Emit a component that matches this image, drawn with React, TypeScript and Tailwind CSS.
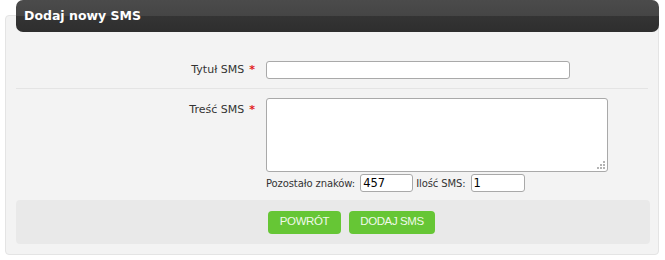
const font = { fontFamily: '"DejaVu Sans", Verdana, sans-serif' };

function Grip() {
  const dots = [
    [6, 0],
    [3, 3],
    [6, 3],
    [0, 6],
    [3, 6],
    [6, 6],
  ];
  return (
    <div className="pointer-events-none absolute bottom-[3px] right-[3px] h-[8px] w-[8px]">
      {dots.map(([x, y]) => (
        <span
          key={`${x}-${y}`}
          className="absolute h-[2px] w-[2px] bg-[#b4b4b4]"
          style={{ left: x, top: y }}
        />
      ))}
    </div>
  );
}

export default function App() {
  return (
    <div className="h-[260px] w-[665px] overflow-hidden bg-white pt-[15px] pl-[5px]" style={font}>
      <div className="w-[654px] rounded-[4px] border border-[#e4e4e4] bg-[#f3f3f3] px-[10px] pb-[10px]">
        <div className="-mr-[11px] -mt-[16px] flex h-[32px] items-center rounded-[7px] bg-[linear-gradient(#4b4b4b,#454545_50%,#343434_50%,#2e2e2e)] pl-[8px]">
          <span className="text-[12.5px] font-bold text-white">Dodaj nowy SMS</span>
        </div>

        <div className="flex items-center pt-[29px] pb-[9px]">
          <label className="w-[240px] pr-[1px] text-right text-[11px] text-[#333]">
            Tytuł SMS<span className="ml-[5px] font-bold text-[#e21b1b]">*</span>
          </label>
          <input
            type="text"
            className="ml-[10px] h-[18px] w-[304px] rounded-[3px] border border-[#a9a9a9] bg-white px-[3px] text-[12px] outline-none"
          />
        </div>

        <div className="h-px bg-[#e4e4e4]" />

        <div className="flex items-start pt-[9px]">
          <label className="w-[240px] pt-[4px] pr-[1px] text-right text-[11px] text-[#333]">
            Treść SMS<span className="ml-[5px] font-bold text-[#e21b1b]">*</span>
          </label>
          <div className="ml-[10px]">
            <div className="relative">
              <textarea className="block h-[74px] w-[342px] resize-none rounded-[3px] border border-[#a9a9a9] bg-white outline-none" />
              <Grip />
            </div>
            <div className="mt-[2px] flex items-center text-[10px] text-[#333]">
              <span className="tracking-[-0.1px]">Pozostało znaków:</span>
              <input
                readOnly
                value="457"
                className="ml-[5px] h-[18px] w-[53px] rounded-[3px] border border-[#a9a9a9] bg-white px-[2px] text-[11.5px] text-black outline-none"
              />
              <span className="ml-[3px] tracking-[-0.1px]">Ilość SMS:</span>
              <input
                readOnly
                value="1"
                className="ml-[5px] h-[18px] w-[54px] rounded-[3px] border border-[#a9a9a9] bg-white px-[2px] text-[11.5px] text-black outline-none"
              />
            </div>
          </div>
        </div>

        <div className="-mr-[2px] mt-[8px] flex h-[44px] items-center rounded-[4px] bg-[#e9e9e9] pl-[252px]">
          <div className="flex gap-[8px]" style={{ fontFamily: '"Liberation Sans", Arial, sans-serif' }}>
            <button className="h-[23px] w-[73px] rounded-[4px] bg-[#66c635] text-[11.5px] tracking-[-0.4px] text-[#f0f9ea]">
              POWRÓT
            </button>
            <button className="h-[23px] w-[86px] rounded-[4px] bg-[#66c635] text-[11.5px] tracking-[-0.4px] text-[#f0f9ea]">
              DODAJ SMS
            </button>
          </div>
        </div>
      </div>
    </div>
  );
}
